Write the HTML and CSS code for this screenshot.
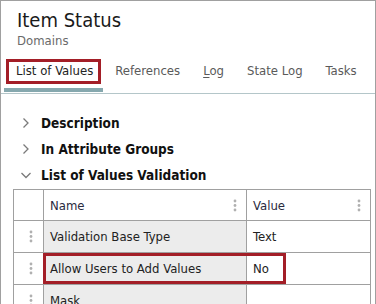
FILE: index.html
```html
<!DOCTYPE html>
<html>
<head>
<meta charset="utf-8">
<link rel="stylesheet" href="styles.css">
</head>
<body>
<div class="panel">
  <header class="head">
    <h1 class="title">Item Status</h1>
    <div class="subtitle">Domains</div>
  </header>
  <nav class="tabs">
    <div class="tab active">List of Values</div>
    <div class="tab">References</div>
    <div class="tab"><span class="ak">L</span>og</div>
    <div class="tab">State Log</div>
    <div class="tab">Tasks</div>
  </nav>
  <div class="sections">
    <div class="sec">
      <svg class="chev" width="12" height="12" viewBox="0 0 12 12"><path d="M3.5 1.5 L8 6 L3.5 10.5" fill="none" stroke="#7a7a7a" stroke-width="1.3"/></svg>
      <span>Description</span>
    </div>
    <div class="sec">
      <svg class="chev" width="12" height="12" viewBox="0 0 12 12"><path d="M3.5 1.5 L8 6 L3.5 10.5" fill="none" stroke="#7a7a7a" stroke-width="1.3"/></svg>
      <span>In Attribute Groups</span>
    </div>
    <div class="sec">
      <svg class="chev" width="12" height="12" viewBox="0 0 12 12"><path d="M1.5 4 L6 8.5 L10.5 4" fill="none" stroke="#7a7a7a" stroke-width="1.3"/></svg>
      <span>List of Values Validation</span>
    </div>
  </div>
  <div class="grid-wrap">
    <div class="grid">
      <div class="cell hdr"></div>
      <div class="cell hdr spread"><span>Name</span><svg class="dots" width="4" height="13" viewBox="0 0 4 13"><circle cx="2" cy="2" r="1.4"/><circle cx="2" cy="6.5" r="1.4"/><circle cx="2" cy="11" r="1.4"/></svg></div>
      <div class="cell hdr spread"><span>Value</span><svg class="dots" width="4" height="13" viewBox="0 0 4 13"><circle cx="2" cy="2" r="1.4"/><circle cx="2" cy="6.5" r="1.4"/><circle cx="2" cy="11" r="1.4"/></svg></div>

      <div class="cell handle"><svg class="dots" width="4" height="13" viewBox="0 0 4 13"><circle cx="2" cy="2" r="1.4"/><circle cx="2" cy="6.5" r="1.4"/><circle cx="2" cy="11" r="1.4"/></svg></div>
      <div class="cell name">Validation Base Type</div>
      <div class="cell">Text</div>

      <div class="cell handle"><svg class="dots" width="4" height="13" viewBox="0 0 4 13"><circle cx="2" cy="2" r="1.4"/><circle cx="2" cy="6.5" r="1.4"/><circle cx="2" cy="11" r="1.4"/></svg></div>
      <div class="cell name">Allow Users to Add Values</div>
      <div class="cell">No</div>

      <div class="cell handle"><svg class="dots" width="4" height="13" viewBox="0 0 4 13"><circle cx="2" cy="2" r="1.4"/><circle cx="2" cy="6.5" r="1.4"/><circle cx="2" cy="11" r="1.4"/></svg></div>
      <div class="cell name">Mask</div>
      <div class="cell"></div>
    </div>
    <div class="highlight"></div>
  </div>
</div>
</body>
</html>
```

FILE: styles.css
```css
html, body {
  margin: 0;
  padding: 0;
  background: #ffffff;
}
body {
  font-family: "DejaVu Sans Condensed", "DejaVu Sans", sans-serif;
  font-stretch: condensed;
  color: #1e1e1e;
}
.panel {
  width: 376px;
  height: 304px;
  box-sizing: border-box;
  border: 1px solid #a0a0a0;
  border-bottom: none;
  overflow: hidden;
}
.head {
  padding: 7px 0 0 16px;
}
.title {
  margin: 0;
  font-size: 20px;
  line-height: 24px;
  font-weight: normal;
  color: #1a1a1a;
}
.subtitle {
  margin-top: 1px;
  font-size: 13px;
  line-height: 16px;
  color: #6a6a6a;
}
.tabs {
  display: flex;
  padding: 0 0 1px 3px;
  border-bottom: 1px solid #b4c6c9;
}
.tab {
  position: relative;
  padding: 14px 11px 9px 12px;
  font-size: 13px;
  line-height: 16px;
  color: #5a5a5a;
  border-bottom: 4px solid transparent;
}
.tab.active {
  padding-right: 10px;
  color: #222222;
  border-bottom-color: #86a8ae;
}
.tab.active::before {
  content: "";
  position: absolute;
  left: 2px;
  right: 2px;
  top: 10px;
  height: 25px;
  box-sizing: border-box;
  border: 3px solid #a31e27;
}
.ak {
  text-decoration: underline;
  text-underline-offset: 2px;
}
.sections {
  margin-top: 16px;
  padding-left: 19px;
}
.sec {
  display: flex;
  align-items: center;
  height: 26px;
  font-size: 13.5px;
  font-weight: bold;
  color: #111111;
}
.chev {
  margin-right: 9px;
  flex: none;
}
.grid-wrap {
  position: relative;
  margin: 1px 0 0 12px;
  width: 358px;
}
.grid {
  display: grid;
  grid-template-columns: 30px 203px 124px;
  grid-auto-rows: 32px;
  grid-template-rows: 31px;
  border-left: 1px solid #a0a0a0;
  border-top: 1px solid #a0a0a0;
}
.cell {
  box-sizing: border-box;
  border-right: 1px solid #a0a0a0;
  border-bottom: 1px solid #a0a0a0;
  display: flex;
  align-items: center;
  padding-left: 6px;
  font-size: 13px;
  color: #222222;
  white-space: nowrap;
  overflow: hidden;
}
.cell.spread {
  justify-content: space-between;
  padding-right: 9px;
  color: #2a2a40;
}
.cell.name {
  background: #ececec;
}
.cell.handle {
  padding-left: 15px;
}
.dots {
  fill: #b0b0b0;
  flex: none;
}
.highlight {
  position: absolute;
  left: 30px;
  top: 64px;
  width: 243px;
  height: 31px;
  box-sizing: border-box;
  border: 3px solid #a31e27;
}
```
